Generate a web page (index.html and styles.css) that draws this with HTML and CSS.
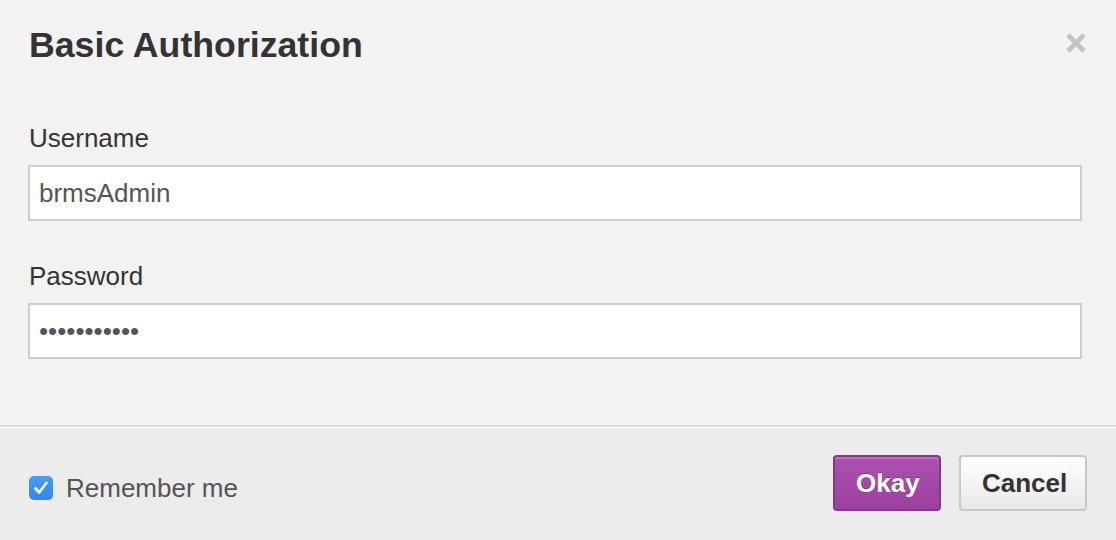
FILE: index.html
```html
<!DOCTYPE html>
<html>
<head>
<meta charset="utf-8">
<link rel="stylesheet" href="styles.css">
</head>
<body>
<div class="modal">
  <div class="modal-header">
    <h3 class="title">Basic Authorization</h3>
    <button class="close" aria-label="Close">
      <svg width="20" height="20" viewBox="0 0 20 20"><path d="M2 2 L18 18 M18 2 L2 18" stroke="#c2c2c2" stroke-width="4.6" fill="none"/></svg>
    </button>
  </div>
  <div class="modal-body">
    <label class="label" for="u">Username</label>
    <input class="field" id="u" type="text" value="brmsAdmin">
    <label class="label label-second" for="p">Password</label>
    <input class="field" id="p" type="password" value="brmsAdmin12">
  </div>
  <div class="modal-footer">
    <label class="remember">
      <span class="check">
        <svg width="18" height="18" viewBox="0 0 18 18"><path d="M3.5 9.5 L7.2 13.5 L14.5 3.8" stroke="#fff" stroke-width="2.6" fill="none" stroke-linecap="round" stroke-linejoin="round"/></svg>
      </span>
      <span class="remember-text">Remember me</span>
    </label>
    <div class="actions">
      <button class="btn btn-primary">Okay</button>
      <button class="btn btn-default">Cancel</button>
    </div>
  </div>
</div>
</body>
</html>
```
FILE: styles.css
```css
* { box-sizing: border-box; }
html, body {
  margin: 0;
  padding: 0;
  background: #f2f2f2;
  font-family: "Liberation Sans", Arial, sans-serif;
}
.modal {
  width: 1116px;
  height: 540px;
  display: flex;
  flex-direction: column;
}
.modal-header {
  display: flex;
  justify-content: space-between;
  align-items: flex-start;
  padding: 23px 30px 0 29px;
}
.title {
  margin: 0;
  font-size: 35.7px;
  line-height: 44px;
  font-weight: bold;
  color: #333;
}
.close {
  border: 0;
  background: transparent;
  padding: 0;
  margin-top: 10px;
  width: 20px;
  height: 20px;
  display: block;
}
.close svg { display: block; }
.modal-body {
  display: flex;
  flex-direction: column;
  padding: 56px 34px 0 28px;
  height: 360px;
  border-bottom: 2px solid #dcdcdc;
}
.label {
  font-size: 26px;
  line-height: 30px;
  color: #333;
  margin: 0 0 12px 1px;
}
.label-second { margin-top: 40px; }
.field {
  width: 1054px;
  height: 56px;
  border: 2px solid #cdcdcd;
  background: #fff;
  padding: 0 9px;
  font-family: "Liberation Sans", Arial, sans-serif;
  font-size: 26px;
  color: #555;
  outline: none;
  margin: 0;
}
.modal-footer {
  flex: 1;
  border-top: 1px solid #fff;
  background: #ececec;
  display: flex;
  align-items: center;
  justify-content: space-between;
  padding: 0 29px 2px 29px;
}
.remember {
  display: flex;
  align-items: center;
  gap: 13px;
  margin-top: 10px;
}
.check {
  width: 24px;
  height: 24px;
  border-radius: 5px;
  background: linear-gradient(#4a9cf8, #2f86f3);
  display: flex;
  align-items: center;
  justify-content: center;
}
.remember-text {
  font-size: 26px;
  line-height: 30px;
  color: #555;
}
.actions {
  display: flex;
  gap: 18px;
}
.btn {
  height: 56px;
  font-family: "Liberation Sans", Arial, sans-serif;
  font-size: 26px;
  font-weight: bold;
  border-radius: 4px;
  padding: 0 21px;
  margin: 0;
}
.btn-primary {
  width: 108px;
  color: #fff;
  background: linear-gradient(#ad52b0, #9b409e);
  border: 2px solid #8a3390;
  box-shadow: inset 0 2px 0 rgba(255,255,255,0.2);
  text-shadow: 0 -1px 0 rgba(0,0,0,0.25);
}
.btn-default {
  width: 128px;
  color: #333;
  background: linear-gradient(#ffffff, #e8e8e8);
  border: 2px solid #c8c8c8;
}
```
